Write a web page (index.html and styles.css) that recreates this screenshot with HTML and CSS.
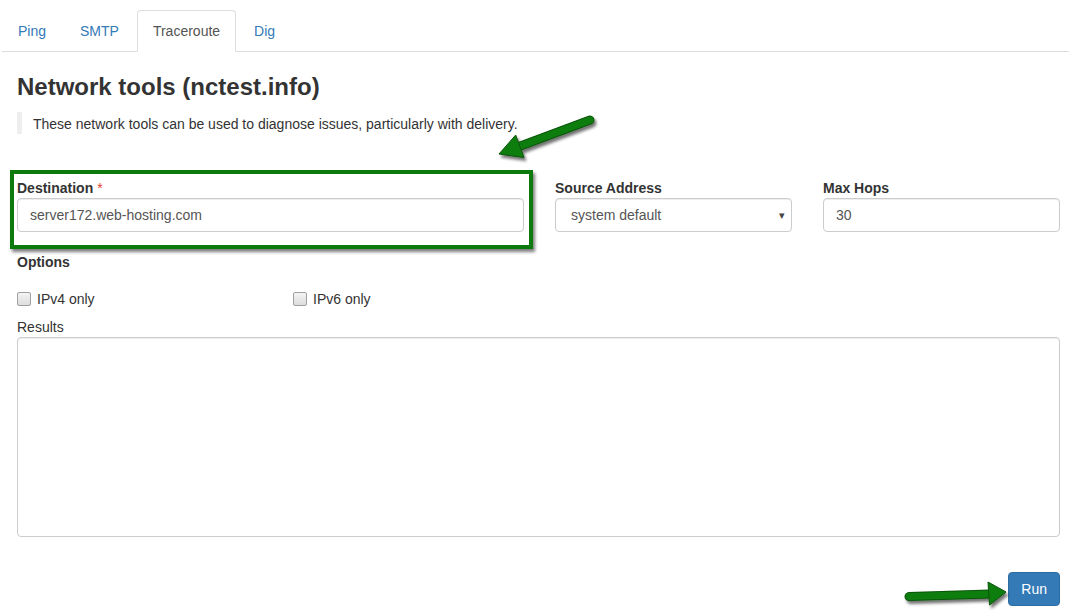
FILE: index.html
```html
<!DOCTYPE html>
<html lang="en">
<head>
  <meta charset="UTF-8">
  <meta name="viewport" content="width=device-width, initial-scale=1.0">
  <title>Network tools</title>
  <link rel="stylesheet" href="styles.css">
</head>
<body>
  <!-- Tabs -->
  <ul class="nav-tabs">
    <li><a href="#">Ping</a></li>
    <li><a href="#">SMTP</a></li>
    <li class="active"><a href="#">Traceroute</a></li>
    <li><a href="#">Dig</a></li>
  </ul>

  <div class="content">
    <h3>Network tools (nctest.info)</h3>
    <blockquote>These network tools can be used to diagnose issues, particularly with delivery.</blockquote>

    <div class="row">
      <div class="col">
        <label>Destination <span class="req">*</span></label>
        <input class="form-control" type="text" value="server172.web-hosting.com">
      </div>
      <div class="col">
        <label>Source Address</label>
        <div class="select-wrap">
          <div class="form-control select">system default</div>
          <span class="caret">&#9662;</span>
        </div>
      </div>
      <div class="col">
        <label>Max Hops</label>
        <input class="form-control" type="text" value="30">
      </div>
    </div>

    <label class="options-label">Options</label>
    <div class="checks">
      <label class="check first"><input type="checkbox"> IPv4 only</label>
      <label class="check"><input type="checkbox"> IPv6 only</label>
    </div>

    <label class="results-label">Results</label>
    <textarea class="form-control results"></textarea>

    <div class="actions">
      <button class="btn">Run</button>
    </div>
  </div>

  <!-- annotations -->
  <div class="highlight"></div>

  <svg class="arrow arrow-down" width="115" height="55" viewBox="0 0 115 55">
    <defs>
      <filter id="sh1" x="-20%" y="-40%" width="140%" height="180%">
        <feDropShadow dx="2" dy="3" stdDeviation="1.5" flood-color="#000" flood-opacity="0.55"/>
      </filter>
    </defs>
    <g filter="url(#sh1)">
      <line x1="100" y1="10" x2="29" y2="36.5" stroke="#085408" stroke-width="9" stroke-linecap="round"/>
      <line x1="100" y1="10" x2="29" y2="36.5" stroke="#0f7d0f" stroke-width="7" stroke-linecap="round"/>
      <polygon points="9,44 25.7,25 34,47.5" fill="#0f7d0f" stroke="#085408" stroke-width="1" stroke-linejoin="round"/>
    </g>
  </svg>

  <svg class="arrow arrow-right" width="115" height="36" viewBox="0 0 115 36">
    <defs>
      <filter id="sh2" x="-20%" y="-40%" width="140%" height="180%">
        <feDropShadow dx="2" dy="3" stdDeviation="1.5" flood-color="#000" flood-opacity="0.55"/>
      </filter>
    </defs>
    <g filter="url(#sh2)">
      <line x1="9" y1="18.5" x2="90" y2="16" stroke="#085408" stroke-width="9" stroke-linecap="round"/>
      <line x1="9" y1="18.5" x2="90" y2="16" stroke="#0f7d0f" stroke-width="7" stroke-linecap="round"/>
      <polygon points="106,14 88,4 89.5,27" fill="#0f7d0f" stroke="#085408" stroke-width="1" stroke-linejoin="round"/>
    </g>
  </svg>
</body>
</html>
```

FILE: styles.css
```css
/* Base */
* {
  box-sizing: border-box;
}

body {
  margin: 0;
  font-family: "Liberation Sans", Arial, sans-serif;
  font-size: 14px;
  line-height: 20px;
  color: #333;
  background-color: #fff;
  position: relative;
  height: 614px;
  overflow: hidden;
}

/* Tabs */
.nav-tabs {
  list-style: none;
  display: flex;
  margin: 10px 0 0 2px;
  padding: 0;
  border-bottom: 1px solid #ddd;
}

.nav-tabs li {
  margin-bottom: -1px;
}

.nav-tabs a {
  display: block;
  padding: 10px 15px;
  margin-right: 2px;
  line-height: 20px;
  color: #337ab7;
  text-decoration: none;
  border: 1px solid transparent;
  border-radius: 4px 4px 0 0;
}

.nav-tabs .active a {
  color: #555;
  background-color: #fff;
  border-color: #ddd #ddd transparent;
}

/* Content */
.content {
  padding: 0 9px 0 17px;
}

h3 {
  margin: 22px 0 12px;
  font-size: 24px;
  line-height: 1.1;
  font-weight: 700;
  color: #333;
}

blockquote {
  margin: 0 0 44px;
  padding: 2px 10px 0 11px;
  border-left: 5px solid #eee;
  font-size: 14px;
  line-height: 20px;
}

label {
  display: block;
  font-weight: 700;
  line-height: 20px;
}

.req {
  color: #e0452e;
  font-weight: 400;
}

.row {
  display: grid;
  grid-template-columns: 507px 237px 1fr;
  column-gap: 31px;
}

.col {
  margin-bottom: 20px;
}

.form-control {
  display: block;
  width: 100%;
  height: 34px;
  padding: 6px 12px;
  font-family: inherit;
  font-size: 14px;
  line-height: 20px;
  color: #555;
  background-color: #fff;
  border: 1px solid #ccc;
  border-radius: 4px;
  box-shadow: inset 0 1px 1px rgba(0, 0, 0, 0.075);
  outline: none;
}

.select-wrap {
  position: relative;
}

.select {
  padding-left: 15px;
}

.caret {
  position: absolute;
  right: 7px;
  top: 7px;
  font-size: 11px;
  color: #444;
}

.checks {
  display: flex;
  margin: 17px 0 8px;
}

.check {
  font-weight: 400;
  display: flex;
  align-items: center;
  gap: 6px;
}

.check.first {
  width: 276px;
}

.check input {
  appearance: none;
  -webkit-appearance: none;
  width: 14px;
  height: 14px;
  margin: 0;
  border: 1px solid #a0a0a0;
  border-radius: 2px;
  background: linear-gradient(#f4f4f4, #dcdcdc);
}

.results-label {
  font-weight: 400;
}

.results {
  height: 200px;
  resize: none;
}

.actions {
  display: flex;
  justify-content: flex-end;
  margin-top: 35px;
}

.btn {
  height: 34px;
  padding: 6px 12px;
  font-family: inherit;
  font-size: 14px;
  line-height: 20px;
  color: #fff;
  background-color: #337ab7;
  border: 1px solid #2e6da4;
  border-radius: 4px;
  cursor: pointer;
}

/* Annotations */
.highlight {
  position: absolute;
  left: 10px;
  top: 170px;
  width: 523px;
  height: 79px;
  border: 4px solid #0c7a0c;
  box-shadow: 2px 3px 3px rgba(0, 0, 0, 0.5);
  pointer-events: none;
}

.arrow {
  position: absolute;
  pointer-events: none;
}

.arrow-down {
  left: 490px;
  top: 110px;
}

.arrow-right {
  left: 900px;
  top: 578px;
}
```
